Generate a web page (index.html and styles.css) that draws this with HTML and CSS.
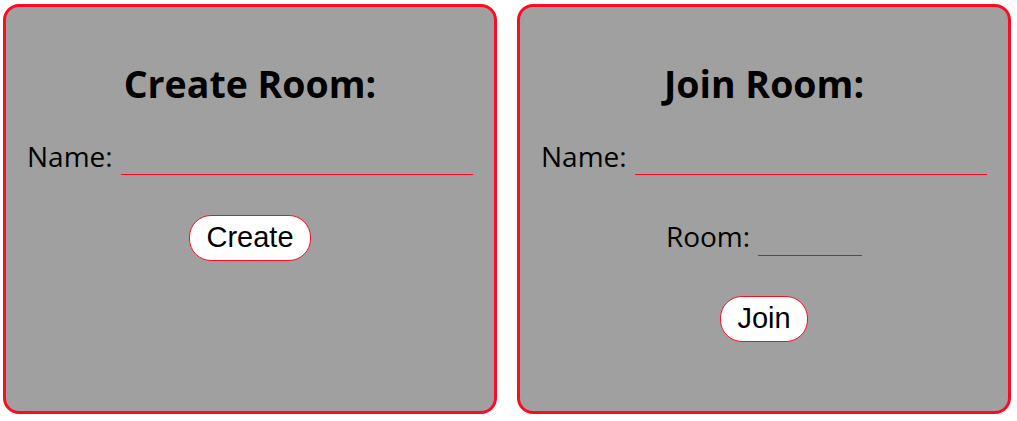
FILE: index.html
```html
<!DOCTYPE html>
<html>
<head>
<meta charset="utf-8">
<link rel="stylesheet" href="styles.css">
</head>
<body>
<main class="rooms">
  <section class="card">
    <h1 class="title">Create Room:</h1>
    <div class="field">
      <label class="label">Name:</label>
      <input class="input input-wide" type="text">
    </div>
    <div class="actions">
      <button class="btn">Create</button>
    </div>
  </section>
  <section class="card">
    <h1 class="title">Join Room:</h1>
    <div class="field">
      <label class="label">Name:</label>
      <input class="input input-wide" type="text">
    </div>
    <div class="field field-center">
      <label class="label">Room:</label>
      <input class="input input-short" type="text">
    </div>
    <div class="actions actions-join">
      <button class="btn">Join</button>
    </div>
  </section>
</main>
</body>
</html>
```

FILE: styles.css
```css
html, body {
  margin: 0;
  padding: 0;
  background: #ffffff;
}
.rooms {
  display: flex;
  gap: 20px;
  padding: 4px 0 0 3px;
}
.card {
  box-sizing: border-box;
  width: 494px;
  height: 410px;
  background: #a0a0a0;
  border: 3px solid #ff0a24;
  border-radius: 16px;
  padding: 0 21px;
  font-family: "Open Sans", sans-serif;
  color: #000;
}
.title {
  margin: 53px 0 0;
  text-align: center;
  font-size: 37.5px;
  line-height: 48px;
  font-weight: 700;
}
.field {
  display: flex;
  align-items: flex-end;
  gap: 8px;
  margin-top: 31px;
}
.field-center {
  justify-content: center;
  margin-top: 46px;
}
.label {
  font-size: 28px;
  line-height: 34px;
}
.input {
  border: none;
  border-bottom: 1px solid #ff0a24;
  background: transparent;
  height: 28px;
  padding: 0;
  outline: none;
  margin-bottom: -2px;
}
.input-wide {
  flex: 1;
  min-width: 0;
}
.input-short {
  width: 104px;
  margin-bottom: -3px;
  border-bottom-color: #b8202e;
}
.actions {
  display: flex;
  justify-content: center;
  margin-top: 42px;
}
.actions-join {
  margin-top: 43px;
}
.btn {
  font-family: "Liberation Sans", Arial, sans-serif;
  font-size: 29px;
  line-height: 31px;
  background: #fff;
  color: #000;
  border: 1px solid #ff0a24;
  border-radius: 22px;
  padding: 6px 16px 7px;
}
```
